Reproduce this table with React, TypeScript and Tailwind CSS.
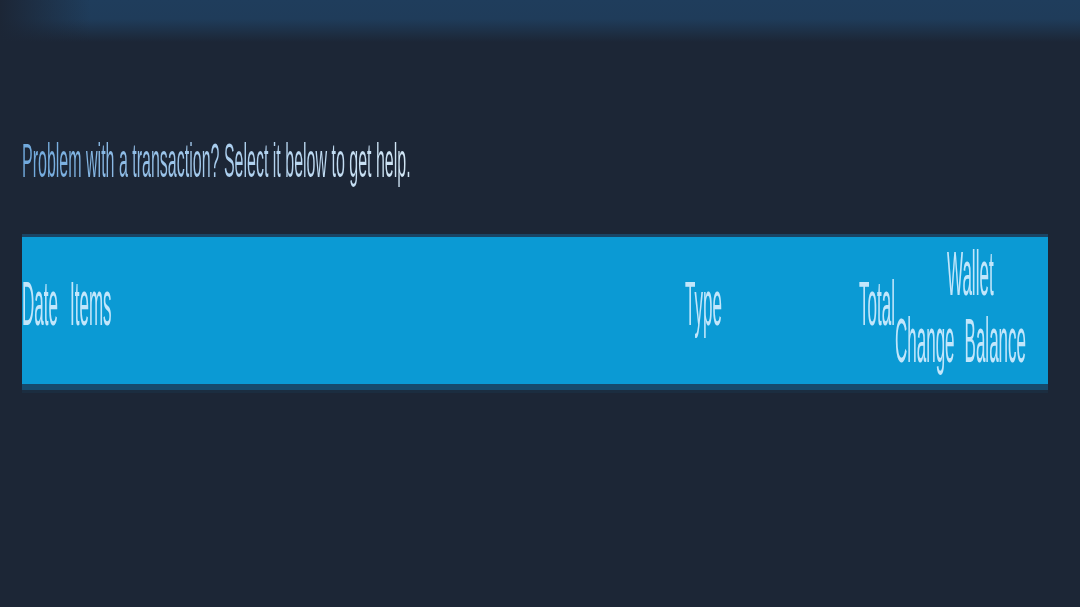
export default function App() {
  // page is drawn at its natural size, then stretched 3x vertically like the capture
  return (
    <div className="h-[607px] w-[1080px] overflow-hidden bg-[#1c2636] font-['Liberation_Sans',Arial,sans-serif]">
      <div className="h-[203px] origin-top scale-y-[3]">
        <div className="h-[14px] bg-[linear-gradient(to_right,#1c2636_0px,rgba(28,38,54,0)_90px),linear-gradient(to_bottom,#1f3d5c_0%,#1f3c5a_45%,#1c2636_100%)]" />

        <div className="px-[22px] pr-[32px] pt-[27.7px]">
          <p className="inline-block bg-gradient-to-r from-[#70a9dd] via-[#a9cdee] to-[#d2e6f5] bg-clip-text text-[16px] leading-[18px] text-transparent">
            Problem with a transaction? Select it below to get help.
          </p>

          <div className="mt-[12.3px] border-t-[1.6px] border-b-[2.2px] border-t-[#1a4565] border-b-[#174a6b] bg-[#0b9ad4] shadow-[0_1px_0_#1b2d40]">
            <div className="flex h-[48.6px] items-center pb-[3px] text-[17px] leading-[18px] text-[#c2e6fb]">
              <div className="w-[48px] shrink-0">
                <span className="inline-block scale-y-[1.25]">Date</span>
              </div>
              <div className="flex-1">
                <span className="inline-block scale-y-[1.25]">Items</span>
              </div>
              <div className="w-[150px] shrink-0">
                <span className="inline-block scale-y-[1.25]">Type</span>
              </div>
              <div className="w-[60px] shrink-0 text-right">
                <span className="inline-block scale-y-[1.25]">Total</span>
              </div>
              <div className="w-[153px] shrink-0">
                <div className="scale-y-[1.25] pt-[2px]">
                  <div className="pl-[52px]">Wallet</div>
                  <div className="flex gap-[10px]">
                    <span>Change</span>
                    <span>Balance</span>
                  </div>
                </div>
              </div>
            </div>
          </div>
        </div>
      </div>
    </div>
  );
}
